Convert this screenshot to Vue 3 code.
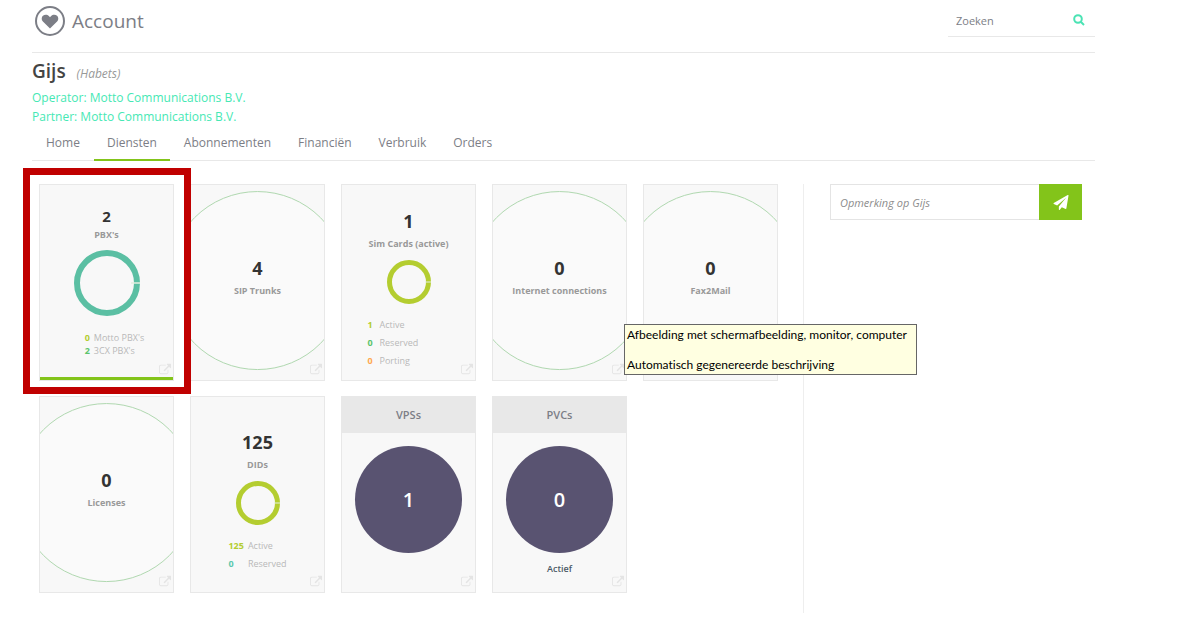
<template>
  <div class="page">
    <header class="topbar">
      <div class="brand">
        <svg class="brand-logo" viewBox="0 0 32 32">
          <circle cx="16" cy="16" r="14" fill="none" stroke="#7c7e86" stroke-width="2" />
          <path
            d="M16 23.5 8.9 16.6C7.3 15 7.3 12.4 8.9 10.8c1.7-1.6 4.4-1.5 6 .2L16 12.2l1.1-1.2c1.6-1.7 4.3-1.8 6-.2 1.6 1.6 1.6 4.2 0 5.8z"
            fill="#7c7e86"
          />
        </svg>
        <span>Account</span>
      </div>
      <form class="search" @submit.prevent>
        <input v-model="query" type="text" placeholder="Zoeken" aria-label="Zoeken" />
        <button type="submit" aria-label="Zoek">
          <svg viewBox="0 0 12 12">
            <circle cx="5" cy="5" r="3.8" />
            <path d="M8 8 11 11" />
          </svg>
        </button>
      </form>
    </header>

    <section class="profile">
      <h1>Gijs <small>(Habets)</small></h1>
      <a href="#operator">Operator: Motto Communications B.V.</a>
      <a href="#partner">Partner: Motto Communications B.V.</a>
    </section>

    <nav class="tabs">
      <a
        v-for="tab in tabs"
        :key="tab"
        href="#"
        :class="{ active: tab === activeTab }"
        @click.prevent="activeTab = tab"
      >{{ tab }}</a>
    </nav>

    <div class="content">
      <main class="cards">
        <article
          v-for="card in cards"
          :key="card.label"
          class="card"
          :class="[`card-${card.type}`, { 'card-selected': card.selected }]"
        >
          <!-- outline circle -->
          <template v-if="card.type === 'plain'">
            <svg class="outline">
              <circle cx="50%" cy="49%" r="89" />
            </svg>
            <div class="count">{{ card.count }}</div>
            <div class="label">{{ card.label }}</div>
          </template>

          <!-- donut with legend -->
          <template v-else-if="card.type === 'chart'">
            <div class="count">{{ card.count }}</div>
            <div class="label">{{ card.label }}</div>
            <svg class="ring" viewBox="0 0 44 44">
              <circle
                cx="22"
                cy="22"
                :r="card.selected ? 20 : 19.5"
                fill="none"
                :stroke="card.color"
                :stroke-width="card.selected ? 4 : 5"
              />
              <path d="M38 22h6" stroke="#e3efe0" />
            </svg>
            <ul class="legend" :class="{ 'legend-wide': card.items.length > 2 }">
              <template v-for="item in card.items" :key="item.name">
                <li :class="item.tone">{{ item.value }}</li>
                <li>{{ item.name }}</li>
              </template>
            </ul>
          </template>

          <!-- filled circle -->
          <template v-else>
            <h2>{{ card.label }}</h2>
            <div class="disc">{{ card.count }}</div>
            <div v-if="card.status" class="status">{{ card.status }}</div>
          </template>

          <a class="open-link" href="#" :aria-label="card.label">
            <svg viewBox="0 0 1792 1536">
              <path
                d="M1408 928v320q0 119-84.5 203.5T1120 1536H288q-119 0-203.5-84.5T0 1248V416q0-119 84.5-203.5T288 128h704q14 0 23 9t9 23v64q0 14-9 23t-23 9H288q-66 0-113 47t-47 113v832q0 66 47 113t113 47h832q66 0 113-47t47-113V928q0-14 9-23t23-9h64q14 0 23 9t9 23zm384-864v512q0 26-19 45t-45 19-45-19l-176-176-652 652q-10 10-23 10t-23-10L695 983q-10-10-10-23t10-23l652-652-176-176q-19-19-19-45t19-45 45-19h512q26 0 45 19t19 45z"
              />
            </svg>
          </a>
          <div v-if="card.selected" class="marker" />
          <div v-if="card.tooltip" class="tooltip" role="tooltip">
            <p v-for="line in card.tooltip" :key="line">{{ line }}</p>
          </div>
        </article>
      </main>

      <aside class="side">
        <form class="remark" @submit.prevent>
          <input v-model="remark" type="text" placeholder="Opmerking op Gijs" aria-label="Opmerking op Gijs" />
          <button type="submit" aria-label="Verstuur">
            <svg viewBox="0 0 1792 1792">
              <path
                d="M1764 11q33 24 27 64l-256 1536q-5 29-32 45-14 8-31 8-11 0-24-5l-453-185-242 295q-18 23-49 23-13 0-22-4-19-7-30.500-23.500T640 1728v-349l864-1059-1069 925-395-162q-37-14-40-55-2-40 32-59L1696 9q15-9 32-9 20 0 36 11z"
              />
            </svg>
          </button>
        </form>
      </aside>
    </div>
  </div>
</template>

<script setup>
import { ref } from 'vue'

const query = ref('')
const remark = ref('')
const activeTab = ref('Diensten')
const tabs = ['Home', 'Diensten', 'Abonnementen', 'Financiën', 'Verbruik', 'Orders']

const cards = [
  {
    type: 'chart',
    label: "PBX's",
    count: 2,
    color: '#5bbfa3',
    selected: true,
    items: [
      { value: 0, name: "Motto PBX's", tone: 'lime' },
      { value: 2, name: "3CX PBX's", tone: 'green' },
    ],
  },
  { type: 'plain', label: 'SIP Trunks', count: 4 },
  {
    type: 'chart',
    label: 'Sim Cards (active)',
    count: 1,
    color: '#b4cd30',
    items: [
      { value: 1, name: 'Active', tone: 'lime' },
      { value: 0, name: 'Reserved', tone: 'green' },
      { value: 0, name: 'Porting', tone: 'orange' },
    ],
  },
  {
    type: 'plain',
    label: 'Internet connections',
    count: 0,
    tooltip: ['Afbeelding met schermafbeelding, monitor, computer', 'Automatisch gegenereerde beschrijving'],
  },
  { type: 'plain', label: 'Fax2Mail', count: 0 },
  { type: 'plain', label: 'Licenses', count: 0 },
  {
    type: 'chart',
    label: 'DIDs',
    count: 125,
    color: '#b4cd30',
    items: [
      { value: 125, name: 'Active', tone: 'lime' },
      { value: 0, name: 'Reserved', tone: 'teal' },
    ],
  },
  { type: 'disc', label: 'VPSs', count: 1 },
  { type: 'disc', label: 'PVCs', count: 0, status: 'Actief' },
]
</script>

<style>
body {
  margin: 0;
  background: #fff;
}
</style>

<style scoped>
.page {
  box-sizing: border-box;
  padding: 0 99px 20px 32px;
  font-family: 'Open Sans', 'Liberation Sans', sans-serif;
  font-size: 12px;
  color: #7c7e86;
}

a {
  color: inherit;
  text-decoration: none;
}

input,
button {
  margin: 0;
  padding: 0;
  border: none;
  background: none;
  font: inherit;
  outline: none;
}

.topbar {
  display: flex;
  justify-content: space-between;
  height: 52px;
  border-bottom: 1px solid #e8e8e8;
}

.brand {
  display: flex;
  align-items: center;
  gap: 6px;
  height: 42px;
  padding-left: 2px;
  font-size: 19px;
}

.brand-logo {
  width: 32px;
  height: 32px;
}

.search {
  display: flex;
  align-items: center;
  box-sizing: border-box;
  width: 147px;
  height: 37px;
  padding: 4px 10px 0 8px;
  border-bottom: 1px solid #e8e8e8;
  font-size: 11px;
}

.search input {
  flex: 1;
  min-width: 0;
}

.search input::placeholder {
  color: #7c7e86;
  opacity: 1;
}

.search button {
  display: flex;
  cursor: pointer;
}

.search svg {
  width: 12px;
  height: 12px;
  fill: none;
  stroke: #4be3b4;
  stroke-width: 2;
}

.profile {
  display: flex;
  flex-direction: column;
  align-items: flex-start;
  padding-top: 4px;
  line-height: 19px;
  color: #46e8b4;
}

h1 {
  margin: 0;
  font-size: 19px;
  font-weight: 600;
  line-height: 28px;
  color: #444;
}

h1 small {
  margin-left: 6px;
  font-size: 12px;
  font-style: italic;
  font-weight: 400;
  color: #999;
}

.tabs {
  display: flex;
  gap: 1px;
  padding-left: 1px;
  border-bottom: 1px solid #e8e8e8;
}

.tabs a {
  padding: 0 13px;
  line-height: 33px;
  border-bottom: 2px solid transparent;
  margin-bottom: -1px;
}

.tabs a.active {
  border-bottom-color: #83c41a;
}

.content {
  display: grid;
  grid-template-columns: 1fr 292px;
  padding-top: 23px;
}

.cards {
  display: grid;
  grid-template-columns: repeat(5, 1fr);
  grid-auto-rows: 197px;
  align-content: start;
  gap: 15px 16px;
  padding: 0 25px 20px 7px;
}

.card {
  position: relative;
  display: flex;
  flex-direction: column;
  align-items: center;
  justify-content: center;
  box-sizing: border-box;
  min-width: 0;
  border: 1px solid #e8e8e8;
  background: #f8f8f8;
}

.card-plain {
  padding-bottom: 9px;
}

.card-chart {
  padding-top: 12px;
}

.card-selected {
  padding-top: 0;
  padding-bottom: 4px;
  box-shadow: inset 0 -3px #83c41a;
}

.outline {
  position: absolute;
  inset: 0;
  width: 100%;
  height: 100%;
  fill: #fafafa;
  stroke: #b0d8b0;
}

.count {
  position: relative;
  font-size: 18px;
  font-weight: 700;
  line-height: 26px;
  color: #333;
}

.label {
  position: relative;
  font-size: 9px;
  font-weight: 700;
  line-height: 20px;
  white-space: nowrap;
  color: #999;
}

.ring {
  width: 44px;
  height: 44px;
  margin: 6px 0 12px;
}

.legend {
  display: grid;
  grid-template-columns: minmax(8px, auto) 1fr;
  column-gap: 4px;
  margin: 0;
  padding: 0;
  list-style: none;
  font-size: 9px;
  line-height: 18px;
  color: #b8b8b8;
}

.legend-wide {
  width: 82px;
}

.lime,
.green,
.teal,
.orange {
  font-weight: 700;
}

.lime {
  color: #b4cd30;
}

.green {
  color: #5cc46c;
}

.teal {
  color: #5bc9ad;
}

.orange {
  color: #ffa850;
}

.card-selected .count {
  font-size: 15px;
  line-height: 22px;
}

.card-selected .label {
  line-height: 16px;
}

.card-selected .ring {
  width: 66px;
  height: 66px;
  margin: 7px 0 15px;
}

.card-selected .legend {
  column-gap: 1px;
  padding-left: 16px;
  line-height: 13px;
}

.card-disc {
  justify-content: flex-start;
}

h2 {
  align-self: stretch;
  margin: 0;
  font-size: 11px;
  font-weight: 600;
  line-height: 36px;
  text-align: center;
  background: #e8e8e8;
}

.disc {
  width: 107px;
  height: 107px;
  margin: 13px 0 6px;
  border-radius: 50%;
  font-size: 20px;
  font-weight: 600;
  line-height: 107px;
  text-align: center;
  color: #fff;
  background: #595371;
}

.status {
  font-size: 9px;
  font-weight: 600;
  line-height: 20px;
  color: #4c5a66;
}

.open-link {
  position: absolute;
  right: 2px;
  bottom: 5px;
  display: flex;
}

.open-link svg {
  width: 12px;
  height: 12px;
  fill: #e4e4e4;
}

.marker {
  position: absolute;
  inset: -17px -18px -14px -17px;
  z-index: 2;
  border: 7px solid #c00000;
  pointer-events: none;
}

.tooltip {
  position: absolute;
  top: 139px;
  left: 131px;
  z-index: 3;
  display: flex;
  flex-direction: column;
  gap: 15px;
  padding: 2px 9px 2px 2px;
  border: 1px solid #666;
  font-family: Lato, 'Open Sans', sans-serif;
  font-size: 12px;
  font-variant-ligatures: none;
  line-height: 15px;
  white-space: nowrap;
  color: #000;
  background: #ffffe1;
}

.tooltip p {
  margin: 0;
}

.side {
  padding: 0 13px 0 26px;
  border-left: 1px solid #eee;
}

.remark {
  display: flex;
  height: 36px;
}

.remark input {
  flex: 1;
  min-width: 0;
  box-sizing: border-box;
  padding-left: 9px;
  border: 1px solid #e4e4e4;
  border-right: none;
  font-size: 11px;
  font-style: italic;
}

.remark input::placeholder {
  color: #8c8c8c;
  opacity: 1;
}

.remark button {
  display: flex;
  align-items: center;
  justify-content: center;
  width: 43px;
  background: #83c41a;
  cursor: pointer;
}

.remark svg {
  width: 16px;
  height: 15px;
  fill: #fff;
}
</style>
